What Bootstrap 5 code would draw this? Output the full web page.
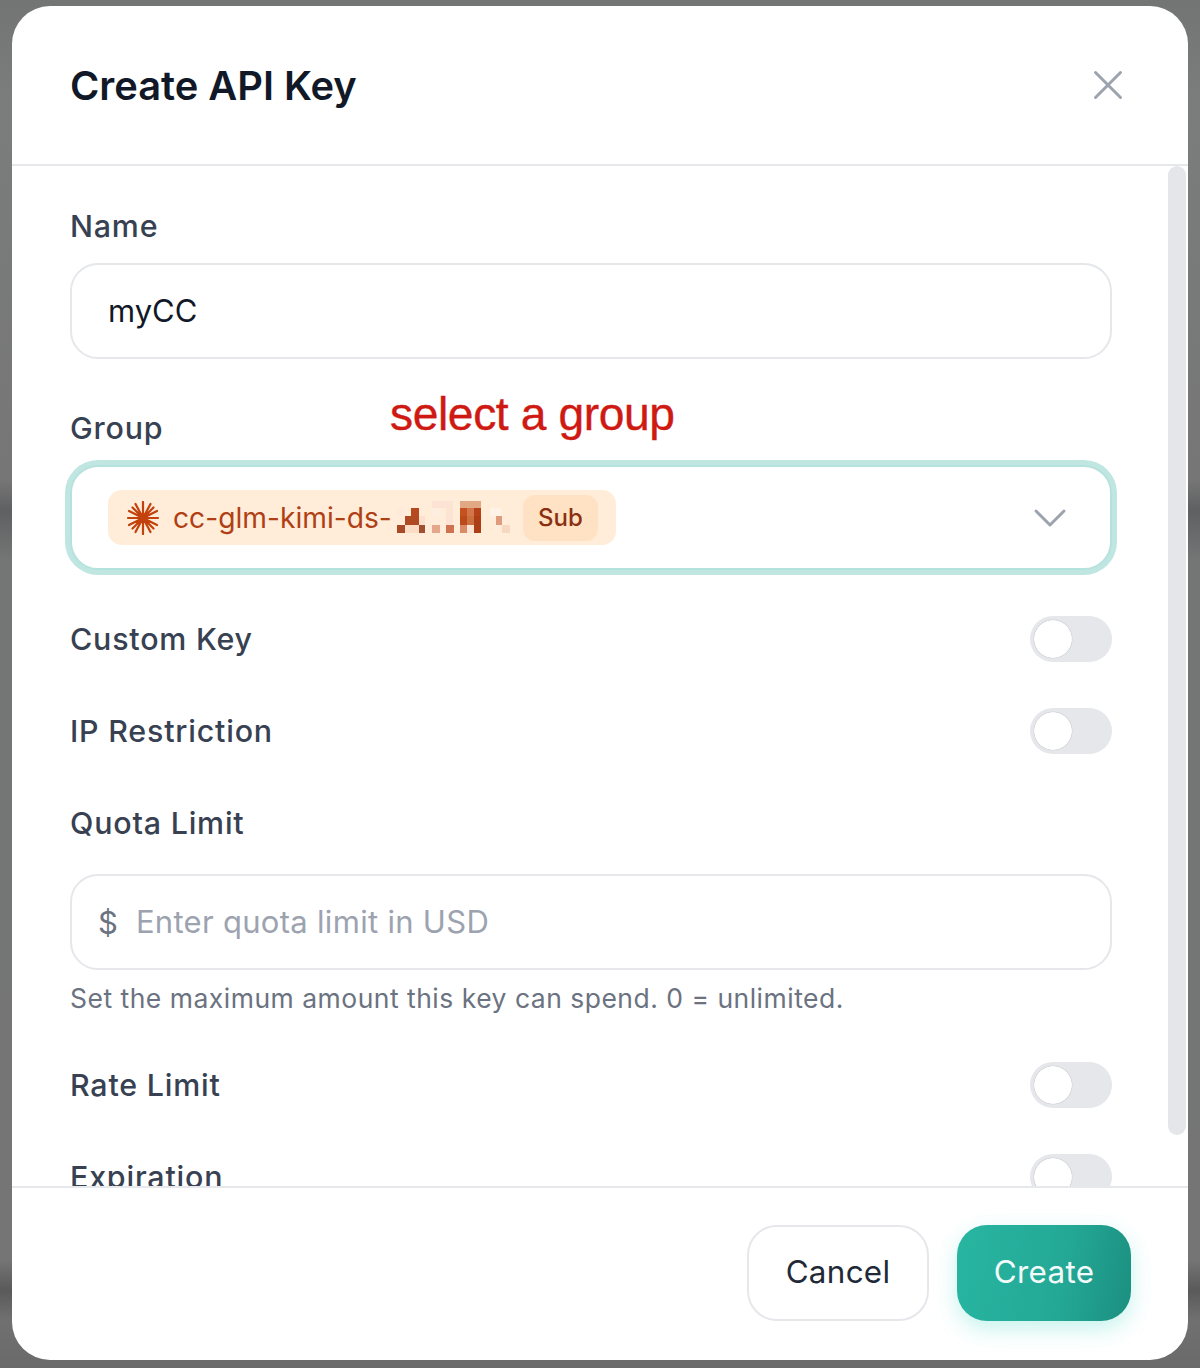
<!DOCTYPE html>
<html lang="en">
<head>
<meta charset="utf-8">
<title>Create API Key</title>
<link rel="stylesheet" href="https://cdn.jsdelivr.net/npm/bootstrap@5.3.0/dist/css/bootstrap.min.css">
<style>
html,body{height:100%;}
body{margin:0;font-family:Inter,"Noto Sans",sans-serif;overflow:hidden;
 background:linear-gradient(180deg,#737474 0,#7b7c7c 100px,#767676 480px,#5f6061 510px,#747575 560px,#757575 1260px,#5a5a5b 1290px,#707070 1320px,#6a6a6a 100%);}
.shell{height:1368px;padding:6px 12px 8px;}
.sheet{height:1354px;border:0;border-radius:38px;background:#fff;overflow:hidden;display:flex;flex-direction:column;position:relative;}
.sheet-top{flex:0 0 160px;padding:2px 60px 0 58px;border-bottom:2px solid #e7e8eb;border-radius:0;}
.sheet-title{font-size:39.85px;font-weight:600;letter-spacing:0;color:#111827;margin:0;line-height:48px;}
.sheet-x{width:40px;height:40px;padding:0;border:0;background:none;display:flex;align-items:center;justify-content:center;margin-top:-2px;}
.sheet-x svg{display:block;}
.sheet-main{flex:1 1 auto;min-height:0;overflow:hidden;padding:40px 76px 0 58px;}
.fld-label{display:block;font-size:30.4px;font-weight:500;letter-spacing:.8px;line-height:40px;color:#374151;margin:0;}
.mb-name{margin-bottom:17px;}
.mb-group{margin-bottom:17px;}
.mb-quota{margin-bottom:31px;}
.fld-input,.fld-input:focus{height:96px;border:2px solid #e5e7eb;border-radius:28px;font-size:31px;color:#111827;padding:0 36px 2px;box-shadow:none;background:#fff;}
.mt-group{margin-top:49px;position:relative;}
.scribble{position:absolute;left:320px;top:-14px;font-family:"Liberation Sans",Arial,sans-serif;font-size:46.2px;line-height:40px;letter-spacing:-.4px;color:#cf1a14;white-space:nowrap;-webkit-text-stroke:.4px #cf1a14;}
.pick{height:105px;border:2px solid #b6e2dd;border-radius:28px;box-shadow:0 0 0 5px #c0e6e2;padding:0 43px 0 36px;display:flex;align-items:center;justify-content:space-between;background:#fff;}
.chip{height:55px;border-radius:14px;background:#ffedd9;display:flex;align-items:center;padding:0 18px;color:#b03f15;font-size:28.2px;line-height:1;}
.chip-name{padding-top:2px;}
.chip-star{margin-right:13px;flex:none;}
.chip-blur{margin-left:3px;margin-right:11px;flex:none;}
.chip-tag{height:46px;width:75px;border-radius:12px;background:#ffe2c4;color:#8a2f10;font-size:24px;font-weight:500;display:flex;align-items:center;justify-content:center;}
.opt-row{display:flex;align-items:center;justify-content:space-between;height:46px;margin-top:46px;margin-bottom:0;padding:0;}
.form-switch .sw.form-check-input,.form-switch .sw.form-check-input:focus{width:82px;height:46px;margin:0;float:none;border:0;border-radius:23px;box-shadow:none;background-color:#e5e7eb;background-image:radial-gradient(circle 19px at 23px 23px,#fff 97%,#d4d5d9 100%,transparent 105%);background-position:0 0;background-size:auto;}
.mt-quota{margin-top:49px;}
.quota-wrap{height:96px;border:2px solid #e5e7eb;border-radius:28px;display:flex;align-items:center;padding:0 26px;}
.quota-sign{font-size:31px;color:#6b7280;margin-right:18px;line-height:1;}
.quota-wrap input{border:0;padding:0;box-shadow:none;font-size:31px;letter-spacing:.3px;color:#111827;background:none;}
.quota-wrap input::placeholder{color:#9ca3af;opacity:1;}
.fld-help{font-size:26.5px;line-height:36px;color:#6b7280;margin-top:10px;letter-spacing:.49px;}
.rail{position:absolute;right:2px;top:160px;width:18px;height:969px;border-radius:9px;background:#e5e6ea;}
.sheet-bottom{flex:0 0 174px;border-top:2px solid #e7e8eb;border-radius:0;padding:37px 57px 0 0;display:flex;justify-content:flex-end;align-items:flex-start;gap:28px;}
.act{height:96px;border-radius:30px;font-size:31.4px;letter-spacing:.3px;line-height:1;display:flex;align-items:center;justify-content:center;padding:0;margin:0;}
.act-cancel,.act-cancel:hover{width:182px;background:#fff;border:2px solid #e5e7eb;color:#1f2937;}
.act-create,.act-create:hover{width:174px;border:0;color:#f2fbf9;background:linear-gradient(100deg,#27b6a1 0,#24a896 60%,#1b8f80 100%);box-shadow:0 8px 22px rgba(45,212,191,.28);}
</style>
</head>
<body>
<div class="shell">
  <div class="modal-content sheet">
    <div class="modal-header sheet-top d-flex align-items-center justify-content-between">
      <h5 class="modal-title sheet-title">Create API Key</h5>
      <button class="sheet-x" type="button" aria-label="Close">
        <svg width="30" height="30" viewBox="0 0 30 30" fill="none" stroke="#9ca3af" stroke-width="3" stroke-linecap="round"><path d="M2.5 2.5 27.5 27.5M27.5 2.5 2.5 27.5"/></svg>
      </button>
    </div>
    <div class="modal-body sheet-main">
      <label class="fld-label mb-name">Name</label>
      <input class="form-control fld-input" type="text" value="myCC">

      <div class="mt-group">
        <label class="fld-label mb-group">Group</label>
        <span class="scribble">select a group</span>
      </div>
      <div class="pick">
        <div class="chip">
          <svg class="chip-star" width="34" height="34" viewBox="0 0 34 34" fill="none" stroke="#c2410c" stroke-width="2.2" stroke-linecap="round"><path d="M17 1V33M2 17H32M6.5 6.5 27.5 27.5M27.5 6.5 6.5 27.5M9.5 3 24.5 31M24.5 3 9.5 31M3 10 31 24M31 10 3 24"/></svg>
          <span class="chip-name">cc-glm-kimi-ds-</span>
          <svg class="chip-blur" width="117" height="36" viewBox="27 45 350 108" shape-rendering="crispEdges">
            <rect x="138" y="48" width="62" height="22" fill="#fde3d3"/><rect x="222" y="48" width="63" height="22" fill="#e0a883"/>
            <rect x="33" y="70" width="20" height="23" fill="#fdeadb"/><rect x="75" y="70" width="22" height="23" fill="#b8481f"/><rect x="138" y="70" width="22" height="23" fill="#feeee0"/><rect x="180" y="70" width="20" height="23" fill="#fde3d3"/><rect x="222" y="70" width="21" height="23" fill="#c4521f"/><rect x="243" y="70" width="21" height="23" fill="#d2764a"/><rect x="264" y="70" width="21" height="23" fill="#b5431a"/><rect x="310" y="70" width="35" height="23" fill="#fff2e6"/>
            <rect x="55" y="93" width="42" height="27" fill="#b04a22"/><rect x="97" y="93" width="20" height="27" fill="#fde0cb"/><rect x="180" y="93" width="20" height="27" fill="#fde3d3"/><rect x="222" y="93" width="21" height="27" fill="#bb4a1a"/><rect x="243" y="93" width="21" height="27" fill="#cc6f3f"/><rect x="264" y="93" width="21" height="27" fill="#ad3f14"/><rect x="328" y="93" width="20" height="27" fill="#e09a7c"/>
            <rect x="33" y="120" width="22" height="25" fill="#a84a26"/><rect x="55" y="120" width="42" height="25" fill="#fbdcc5"/><rect x="97" y="120" width="20" height="25" fill="#a05030"/><rect x="138" y="120" width="22" height="25" fill="#e6a88c"/><rect x="180" y="120" width="22" height="25" fill="#d0714f"/><rect x="222" y="120" width="21" height="25" fill="#d98b68"/><rect x="243" y="120" width="21" height="25" fill="#fde3d3"/><rect x="264" y="120" width="21" height="25" fill="#ad3f14"/><rect x="348" y="120" width="22" height="25" fill="#f6d9c0"/>
          </svg>
          <span class="chip-tag">Sub</span>
        </div>
        <svg width="34" height="20" viewBox="0 0 34 20" fill="none" stroke="#9ca3af" stroke-width="3" stroke-linecap="round" stroke-linejoin="round"><path d="M3 3 17 17 31 3"/></svg>
      </div>

      <div class="form-check form-switch opt-row">
        <label class="fld-label">Custom Key</label>
        <input class="form-check-input sw" type="checkbox" role="switch">
      </div>
      <div class="form-check form-switch opt-row">
        <label class="fld-label">IP Restriction</label>
        <input class="form-check-input sw" type="checkbox" role="switch">
      </div>

      <label class="fld-label mt-quota mb-quota">Quota Limit</label>
      <div class="quota-wrap">
        <span class="quota-sign">$</span>
        <input class="form-control" type="text" placeholder="Enter quota limit in USD">
      </div>
      <div class="fld-help">Set the maximum amount this key can spend. 0 = unlimited.</div>

      <div class="form-check form-switch opt-row">
        <label class="fld-label">Rate Limit</label>
        <input class="form-check-input sw" type="checkbox" role="switch">
      </div>
      <div class="form-check form-switch opt-row">
        <label class="fld-label">Expiration</label>
        <input class="form-check-input sw" type="checkbox" role="switch">
      </div>
    </div>
    <div class="rail"></div>
    <div class="modal-footer sheet-bottom">
      <button class="btn act act-cancel" type="button">Cancel</button>
      <button class="btn act act-create" type="button">Create</button>
    </div>
  </div>
</div>
<script src="https://cdn.jsdelivr.net/npm/bootstrap@5.3.0/dist/js/bootstrap.bundle.min.js"></script>
</body>
</html>
